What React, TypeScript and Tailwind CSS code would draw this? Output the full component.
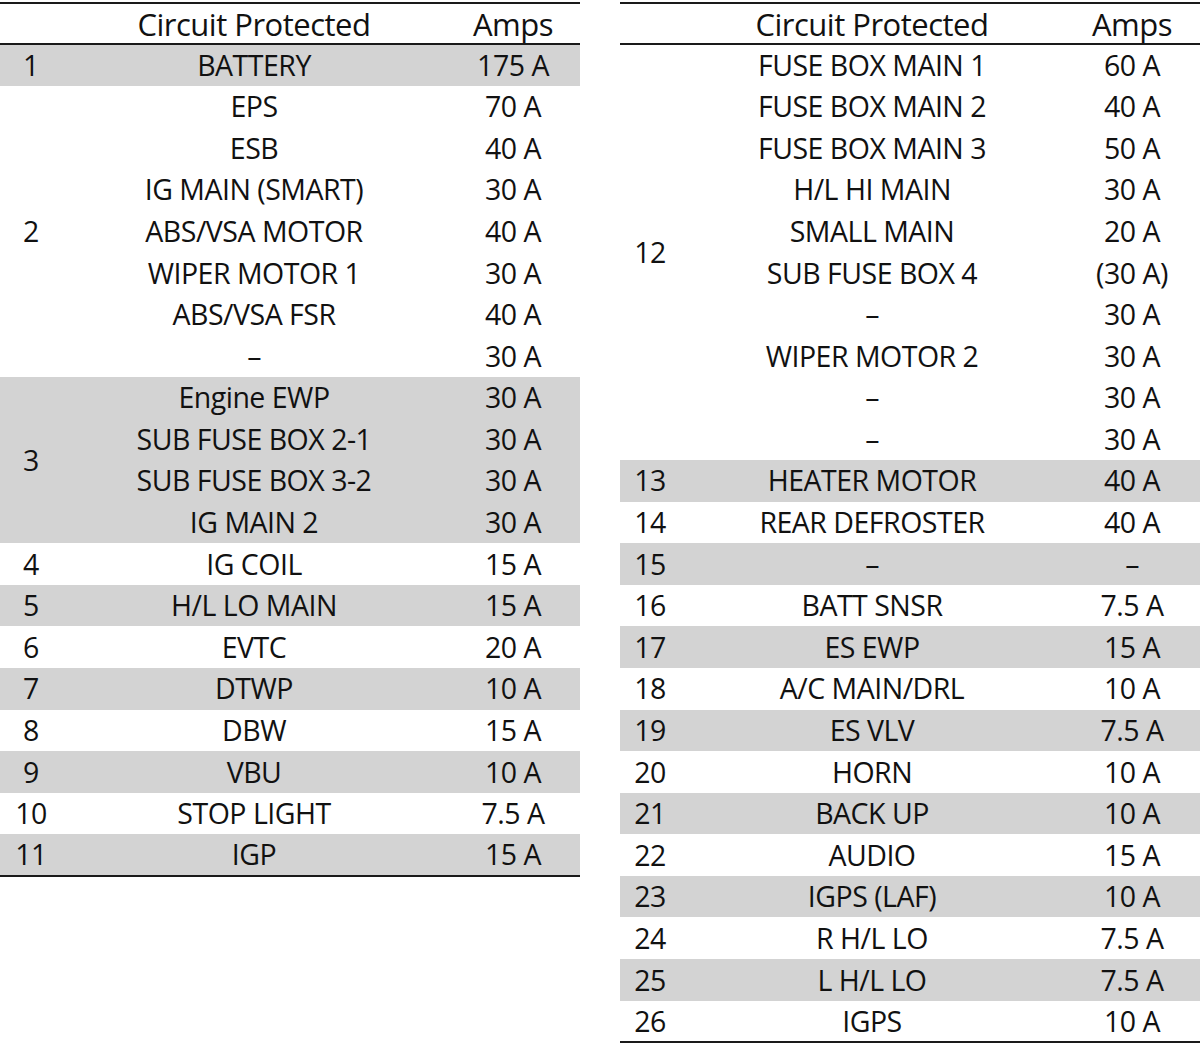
import React from 'react';

type Group = { num: string; gray: boolean; items: [string, string][] };

const left: Group[] = [
  { num: '1', gray: true, items: [['BATTERY', '175 A']] },
  {
    num: '2',
    gray: false,
    items: [
      ['EPS', '70 A'],
      ['ESB', '40 A'],
      ['IG MAIN (SMART)', '30 A'],
      ['ABS/VSA MOTOR', '40 A'],
      ['WIPER MOTOR 1', '30 A'],
      ['ABS/VSA FSR', '40 A'],
      ['–', '30 A'],
    ],
  },
  {
    num: '3',
    gray: true,
    items: [
      ['Engine EWP', '30 A'],
      ['SUB FUSE BOX 2-1', '30 A'],
      ['SUB FUSE BOX 3-2', '30 A'],
      ['IG MAIN 2', '30 A'],
    ],
  },
  { num: '4', gray: false, items: [['IG COIL', '15 A']] },
  { num: '5', gray: true, items: [['H/L LO MAIN', '15 A']] },
  { num: '6', gray: false, items: [['EVTC', '20 A']] },
  { num: '7', gray: true, items: [['DTWP', '10 A']] },
  { num: '8', gray: false, items: [['DBW', '15 A']] },
  { num: '9', gray: true, items: [['VBU', '10 A']] },
  { num: '10', gray: false, items: [['STOP LIGHT', '7.5 A']] },
  { num: '11', gray: true, items: [['IGP', '15 A']] },
];

const right: Group[] = [
  {
    num: '12',
    gray: false,
    items: [
      ['FUSE BOX MAIN 1', '60 A'],
      ['FUSE BOX MAIN 2', '40 A'],
      ['FUSE BOX MAIN 3', '50 A'],
      ['H/L HI MAIN', '30 A'],
      ['SMALL MAIN', '20 A'],
      ['SUB FUSE BOX 4', '(30 A)'],
      ['–', '30 A'],
      ['WIPER MOTOR 2', '30 A'],
      ['–', '30 A'],
      ['–', '30 A'],
    ],
  },
  { num: '13', gray: true, items: [['HEATER MOTOR', '40 A']] },
  { num: '14', gray: false, items: [['REAR DEFROSTER', '40 A']] },
  { num: '15', gray: true, items: [['–', '–']] },
  { num: '16', gray: false, items: [['BATT SNSR', '7.5 A']] },
  { num: '17', gray: true, items: [['ES EWP', '15 A']] },
  { num: '18', gray: false, items: [['A/C MAIN/DRL', '10 A']] },
  { num: '19', gray: true, items: [['ES VLV', '7.5 A']] },
  { num: '20', gray: false, items: [['HORN', '10 A']] },
  { num: '21', gray: true, items: [['BACK UP', '10 A']] },
  { num: '22', gray: false, items: [['AUDIO', '15 A']] },
  { num: '23', gray: true, items: [['IGPS (LAF)', '10 A']] },
  { num: '24', gray: false, items: [['R H/L LO', '7.5 A']] },
  { num: '25', gray: true, items: [['L H/L LO', '7.5 A']] },
  { num: '26', gray: false, items: [['IGPS', '10 A']] },
];

const FuseTable = ({ groups, cols }: { groups: Group[]; cols: [number, number, number] }) => (
  <table className="w-[580px] table-fixed border-collapse border-t-2 border-b-2 border-[#1a1a1a]">
    <colgroup>
      <col style={{ width: cols[0] }} />
      <col style={{ width: cols[1] }} />
      <col style={{ width: cols[2] }} />
    </colgroup>
    <thead>
      <tr className="h-[41px] border-b-2 border-[#1a1a1a] text-[31px]">
        <th />
        <th className="font-normal text-center pt-[1px]">Circuit Protected</th>
        <th className="font-normal text-center pt-[1px]">Amps</th>
      </tr>
    </thead>
    <tbody>
      {groups.map((g) =>
        g.items.map(([name, amps], i) => (
          <tr key={g.num + '-' + i} className={g.gray ? 'h-[41.6px] bg-[#d3d3d3]' : 'h-[41.6px]'}>
            {i === 0 && (
              <td rowSpan={g.items.length} className="text-center align-middle">
                {g.num}
              </td>
            )}
            <td className="text-center whitespace-nowrap">{name}</td>
            <td className="text-center whitespace-nowrap">{amps}</td>
          </tr>
        ))
      )}
    </tbody>
  </table>
);

export default function App() {
  return (
    <div className="w-[1200px] h-[1043px] bg-white text-[#111] pt-[2px] flex items-start gap-[40px] text-[28.5px] leading-none tracking-[-0.5px] font-['Open_Sans',sans-serif]">
      <FuseTable groups={left} cols={[62, 384, 134]} />
      <FuseTable groups={right} cols={[60, 384, 136]} />
    </div>
  );
}
